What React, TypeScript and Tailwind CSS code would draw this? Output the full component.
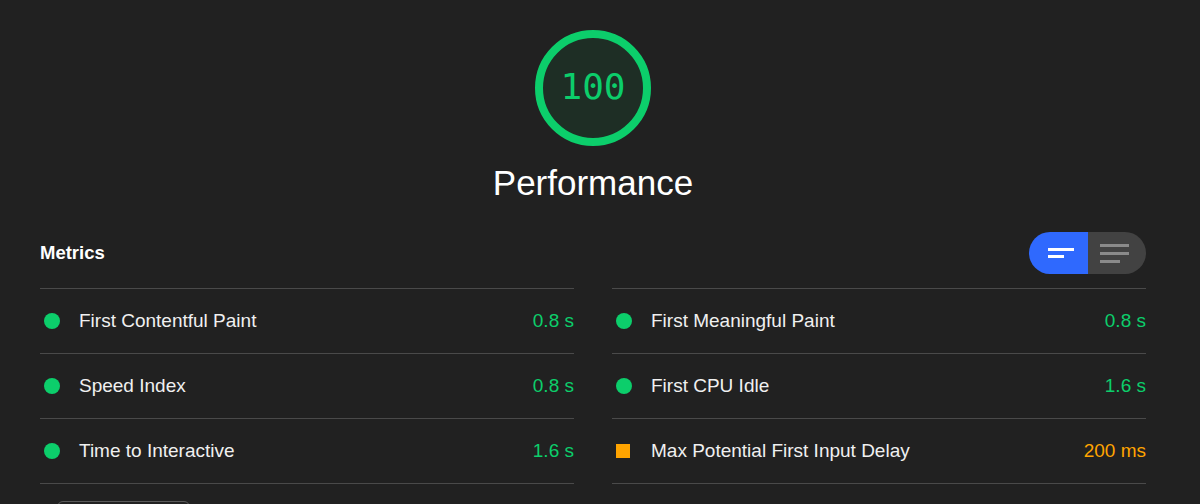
import React from 'react';

type Metric = {
  label: string;
  value: string;
  status: 'pass' | 'average';
};

const metrics: Metric[] = [
  { label: 'First Contentful Paint', value: '0.8 s', status: 'pass' },
  { label: 'First Meaningful Paint', value: '0.8 s', status: 'pass' },
  { label: 'Speed Index', value: '0.8 s', status: 'pass' },
  { label: 'First CPU Idle', value: '1.6 s', status: 'pass' },
  { label: 'Time to Interactive', value: '1.6 s', status: 'pass' },
  { label: 'Max Potential First Input Delay', value: '200 ms', status: 'average' },
];

function Gauge({ score }: { score: number }) {
  return (
    <div className="relative w-[116px] h-[116px]">
      <svg width="116" height="116" viewBox="0 0 116 116" className="absolute inset-0">
        <circle cx="58" cy="58" r="54" fill="#1e2e25" stroke="#0cce6b" strokeWidth="8" />
      </svg>
      <div className="absolute inset-0 flex items-center justify-center text-[#0cce6b] text-[36px] font-['DejaVu_Sans_Mono',monospace] pb-[2px]">
        {score}
      </div>
    </div>
  );
}

function ViewToggle() {
  return (
    <div className="flex h-[42px] w-[117px] rounded-full overflow-hidden">
      <div className="w-[59px] bg-[#2f69fe] flex flex-col justify-center pl-[19px] gap-[4px]">
        <div className="h-[3px] w-[26px] bg-white" />
        <div className="h-[3px] w-[16px] bg-white" />
      </div>
      <div className="flex-1 bg-[#424242] flex flex-col justify-center pl-[12px] gap-[5px]">
        <div className="h-[3px] w-[29px] bg-[#8a8a8a]" />
        <div className="h-[3px] w-[29px] bg-[#8a8a8a]" />
        <div className="h-[3px] w-[20px] bg-[#8a8a8a]" />
      </div>
    </div>
  );
}

function MetricRow({ metric }: { metric: Metric }) {
  const pass = metric.status === 'pass';
  return (
    <div className="flex items-center h-[65px] border-b border-[#4a4a4a]">
      <div className="w-[39px] flex items-center pl-[4px]">
        {pass ? (
          <span className="block w-[16px] h-[16px] rounded-full bg-[#0cce6b]" />
        ) : (
          <span className="block w-[14px] h-[14px] bg-[#ffa400]" />
        )}
      </div>
      <div className="flex-1 text-[#f0f0f0] text-[19px]">{metric.label}</div>
      <div className={pass ? 'text-[#0cce6b] text-[19px]' : 'text-[#ffa400] text-[19px]'}>
        {metric.value}
      </div>
    </div>
  );
}

export default function App() {
  return (
    <div className="w-[1200px] h-[504px] overflow-hidden bg-[#212121] font-['Liberation_Sans',Arial,sans-serif]">
      <div className="w-[1106px] ml-[40px]">
        <div className="flex flex-col items-center pt-[30px]">
          <Gauge score={100} />
          <div className="text-white text-[35px] mt-[17px] leading-[40px]">Performance</div>
        </div>
        <div className="flex items-center justify-between mt-[29px] h-[42px]">
          <div className="text-white font-bold text-[18.5px]">Metrics</div>
          <ViewToggle />
        </div>
        <div className="grid grid-cols-2 gap-x-[38px] mt-[14px]">
          {metrics.map((m) => (
            <div key={m.label} className="first:border-t border-[#4a4a4a] [&:nth-child(2)]:border-t">
              <MetricRow metric={m} />
            </div>
          ))}
        </div>
        <div className="mt-[17px] ml-[17px] w-[133px] h-[36px] rounded-[6px] border border-[#5a5a5a]" />
      </div>
    </div>
  );
}
